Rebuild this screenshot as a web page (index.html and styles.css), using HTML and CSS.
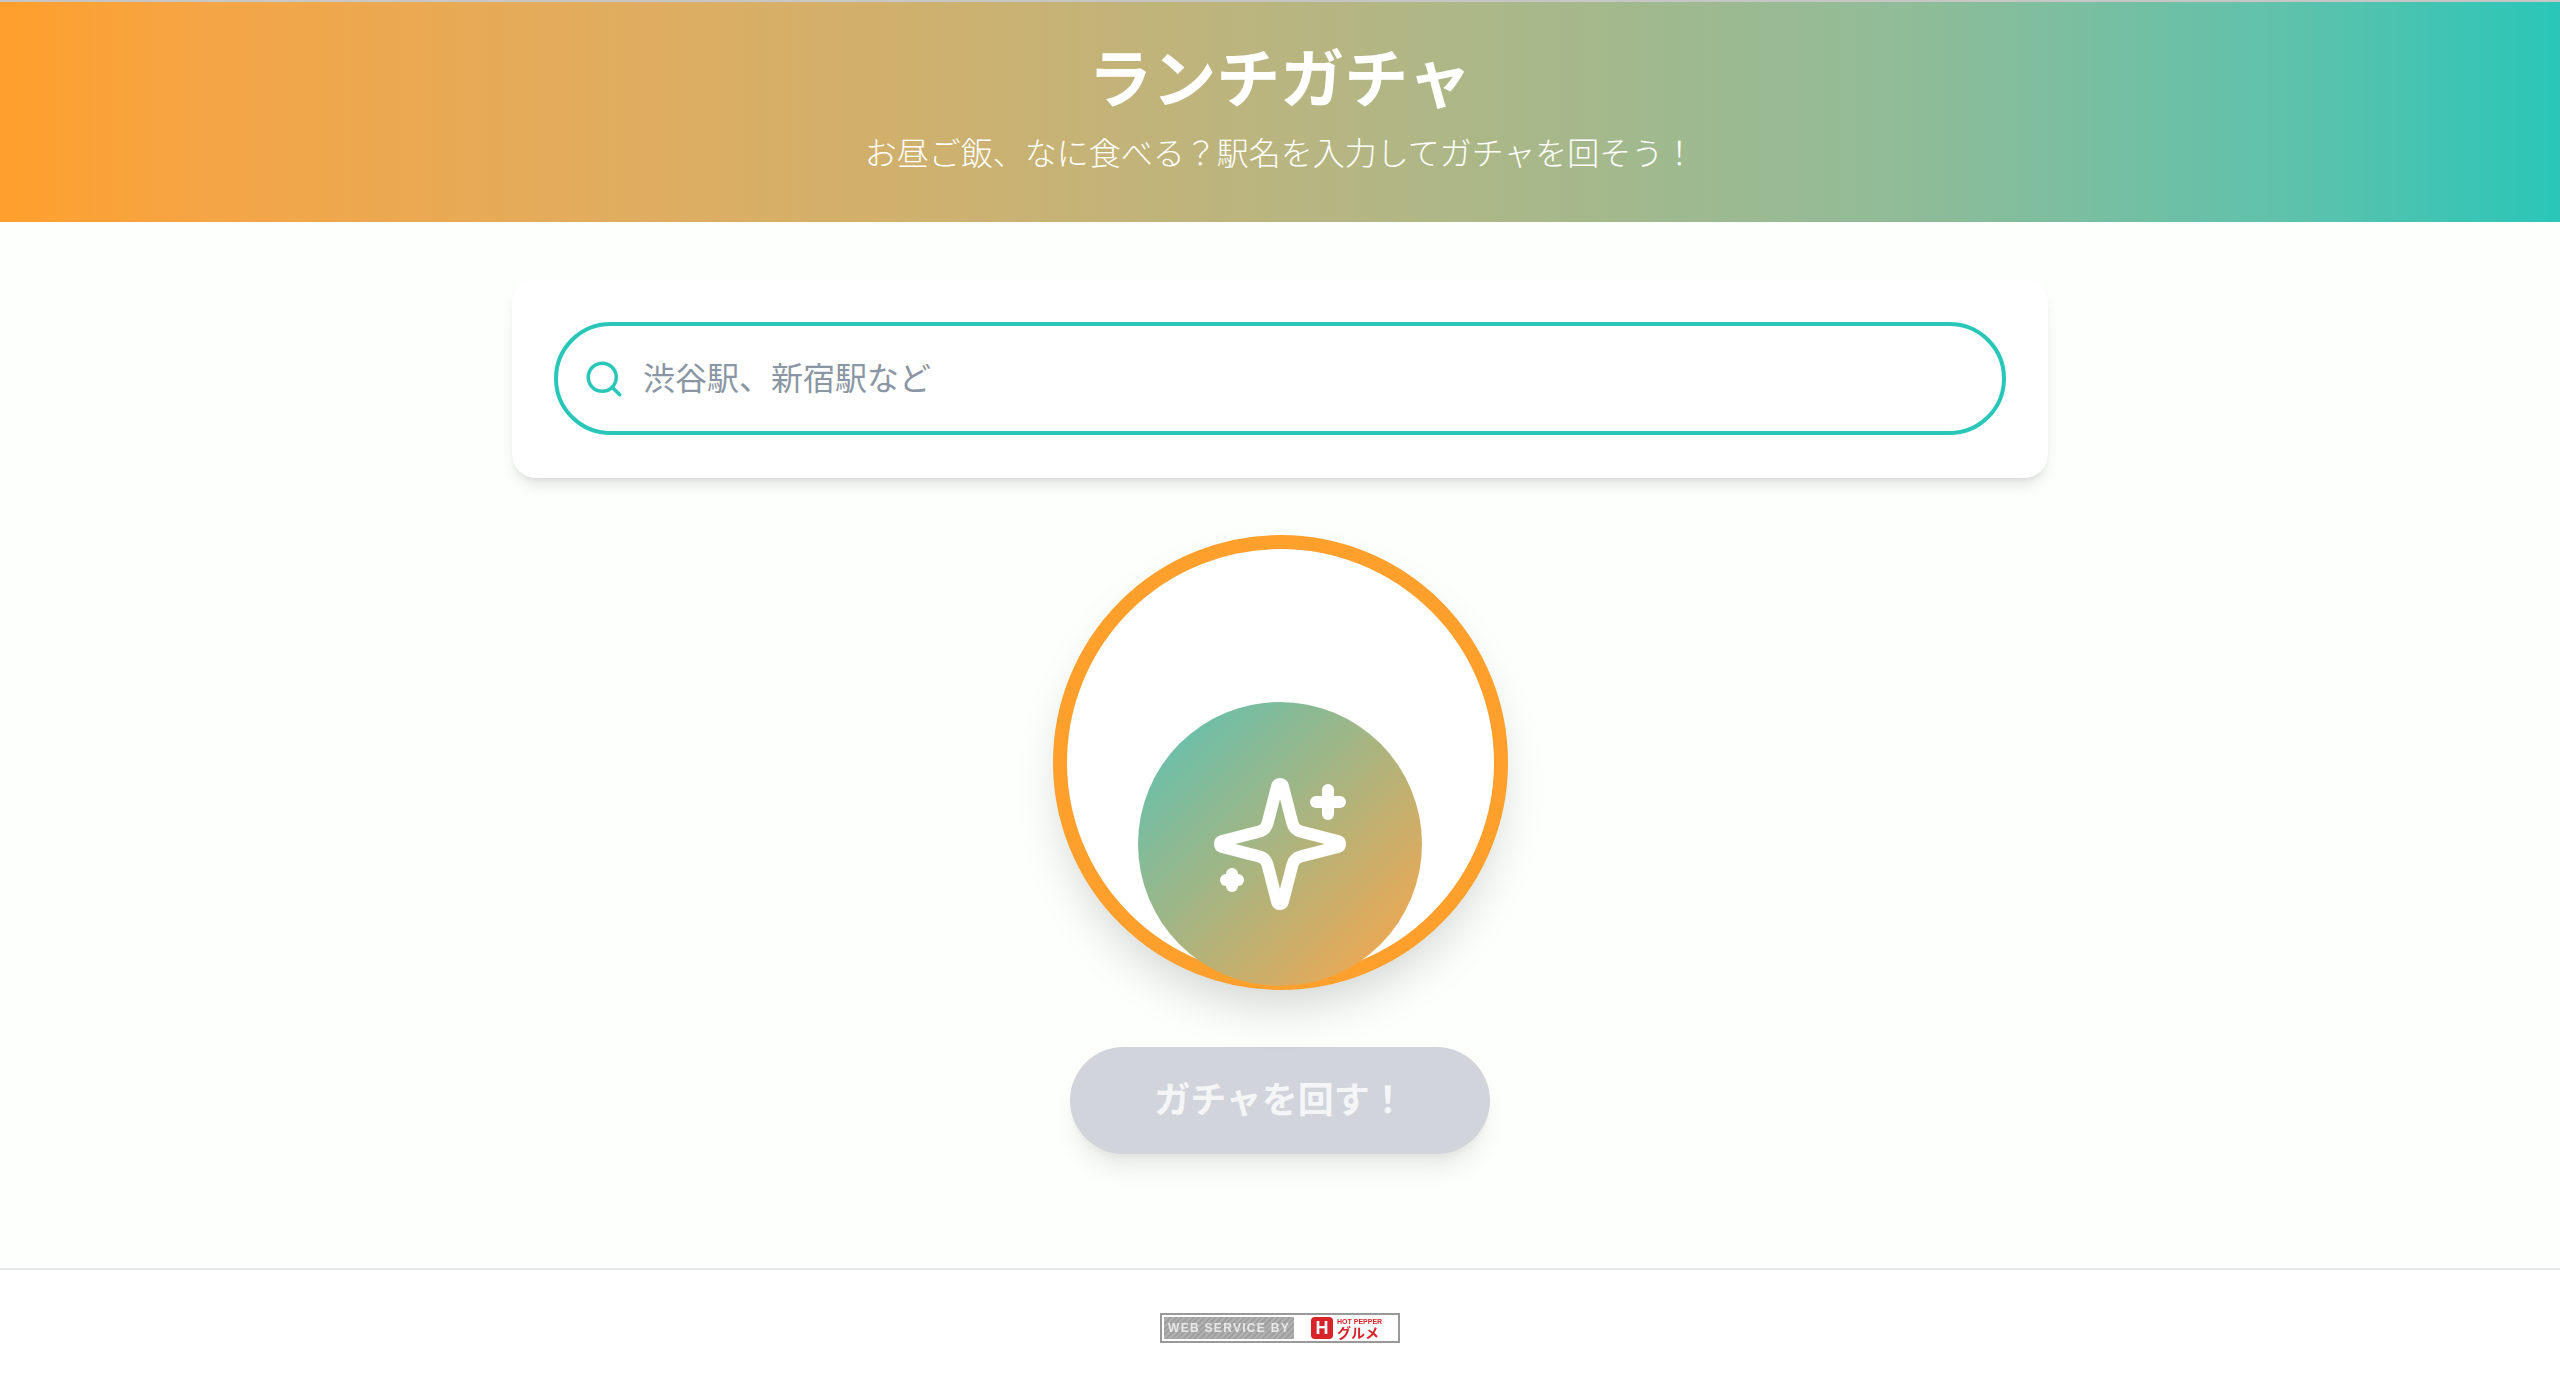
FILE: index.html
```html
<!DOCTYPE html>
<html lang="ja">
<head>
    <meta charset="UTF-8">
    <meta name="viewport" content="width=device-width, initial-scale=1.0">
    <title>ランチガチャ</title>
    <link rel="stylesheet" href="styles.css">
</head>
<body>

    <header class="site-header">
        <h1>ランチガチャ</h1>
        <p>お昼ご飯、なに食べる？駅名を入力してガチャを回そう！</p>
    </header>

    <main class="content">
        <div class="search-card">
            <label class="search-box">
                <svg class="search-icon" viewBox="0 0 24 24" fill="none" stroke="currentColor" stroke-width="2" stroke-linecap="round" stroke-linejoin="round">
                    <path d="m21 21-4.3-4.3"/>
                    <circle cx="11" cy="11" r="8"/>
                </svg>
                <input type="text" placeholder="渋谷駅、新宿駅など">
            </label>
        </div>

        <div class="machine">
            <div class="ball">
                <svg class="sparkle" viewBox="0 0 24 24" fill="none" stroke="currentColor" stroke-width="2" stroke-linecap="round" stroke-linejoin="round">
                    <path d="M9.937 15.5A2 2 0 0 0 8.5 14.063l-6.135-1.582a.5.5 0 0 1 0-.962L8.5 9.936A2 2 0 0 0 9.937 8.5l1.582-6.135a.5.5 0 0 1 .963 0L14.063 8.5A2 2 0 0 0 15.5 9.937l6.135 1.581a.5.5 0 0 1 0 .964L15.5 14.063a2 2 0 0 0-1.437 1.437l-1.582 6.135a.5.5 0 0 1-.963 0z"/>
                    <path d="M20 3v4"/>
                    <path d="M22 5h-4"/>
                    <path d="M4 17v2"/>
                    <path d="M5 18H3"/>
                </svg>
            </div>
        </div>

        <button class="spin-button" disabled>ガチャを回す！</button>
    </main>

    <footer class="site-footer">
        <a class="credit" href="#">
            <span class="credit-label">WEB SERVICE BY</span>
            <span class="credit-logo">
                <span class="credit-mark">H</span>
                <span class="credit-name">
                    <small>HOT PEPPER</small>
                    <b>グルメ</b>
                </span>
            </span>
        </a>
    </footer>

</body>
</html>
```

FILE: styles.css
```css
* {
    box-sizing: border-box;
}
body {
    font-family: "Noto Sans CJK JP", "Noto Sans", sans-serif;
    background-color: #fcfffc;
    margin: 0;
    padding: 0;
    min-height: 1385px;
    display: flex;
    flex-direction: column;
}
.site-header {
    height: 222px;
    padding-top: 32px;
    text-align: center;
    color: white;
    background: linear-gradient(90deg, #ff9f2c, #f5a545 8%, #dfad60 25%, #b9b580 50%, #8fbc98 75%, #5cc2ac 90%, #2ac6b8);
    border-top: 2px solid #c6c6c4;
}
.site-header h1 {
    margin: 0;
    font-size: 64px;
    line-height: 80px;
    font-weight: 700;
}
.site-header p {
    margin: 0;
    margin-top: 13px;
    font-size: 32px;
    line-height: 48px;
    font-weight: 300;
}
.content {
    display: flex;
    flex-direction: column;
    align-items: center;
    gap: 57px;
    padding: 57px 0 114px;
}
.search-card {
    width: 1536px;
    padding: 43px 42px;
    background: white;
    border-radius: 24px;
    box-shadow: 0 10px 15px -3px rgba(0, 0, 0, 0.1), 0 4px 6px -4px rgba(0, 0, 0, 0.1);
}
.search-box {
    display: flex;
    align-items: center;
    gap: 18px;
    height: 113px;
    padding-left: 25px;
    color: #2ac6b8;
    background: white;
    border: 4px solid #2ac6b8;
    border-radius: 57px;
}
.search-icon {
    width: 42px;
    height: 42px;
    flex: none;
}
.search-box input {
    flex: 1;
    height: 54px;
    padding: 0 0 6px;
    border: none;
    outline: none;
    background: transparent;
    font-family: inherit;
    font-size: 32px;
    color: #333;
}
.search-box input::placeholder {
    color: #8a96a3;
    opacity: 1;
}
.machine {
    position: relative;
    width: 455px;
    height: 455px;
    background: white;
    border: 14px solid #ff9f2c;
    border-radius: 50%;
    box-shadow: 0 25px 50px -12px rgba(0, 0, 0, 0.18);
}
.ball {
    position: absolute;
    left: 71px;
    bottom: -10px;
    width: 284px;
    height: 284px;
    display: flex;
    align-items: center;
    justify-content: center;
    color: white;
    border-radius: 50%;
    background: linear-gradient(135deg, #56c3b7, #ffa547);
}
.sparkle {
    width: 144px;
    height: 144px;
}
.spin-button {
    width: 420px;
    height: 107px;
    padding: 0 0 8px;
    border: none;
    border-radius: 54px;
    font-family: inherit;
    font-size: 36px;
    font-weight: 700;
    color: rgba(255, 255, 255, 0.8);
    background: #d1d5db;
    box-shadow: 0 20px 25px -5px rgba(0, 0, 0, 0.08), 0 8px 10px -6px rgba(0, 0, 0, 0.06);
}
.site-footer {
    flex: 1;
    display: flex;
    justify-content: center;
    padding-top: 43px;
    background: white;
    border-top: 2px solid #e5e7eb;
}
.credit {
    display: flex;
    width: 240px;
    height: 30px;
    padding: 2px;
    text-decoration: none;
    background: white;
    border: 2px solid #999;
    filter: blur(0.5px);
}
.credit-label {
    width: 130px;
    font-family: "Liberation Sans", sans-serif;
    font-size: 12px;
    font-weight: 700;
    line-height: 22px;
    letter-spacing: 1.3px;
    text-align: center;
    white-space: nowrap;
    color: #e8e8e8;
    background: repeating-linear-gradient(135deg, #a0a0a0 0, #a0a0a0 2px, #b0b0b0 2px, #b0b0b0 4px);
}
.credit-logo {
    flex: 1;
    display: flex;
    align-items: center;
    justify-content: center;
    gap: 4px;
    color: #d8232a;
}
.credit-mark {
    width: 22px;
    height: 22px;
    font-family: "Liberation Sans", sans-serif;
    font-size: 18px;
    font-weight: 700;
    line-height: 23px;
    text-align: center;
    color: white;
    background: #d8232a;
    border-radius: 4px;
}
.credit-name {
    display: flex;
    flex-direction: column;
    width: 42px;
    white-space: nowrap;
}
.credit-name small {
    font-family: "Liberation Sans", sans-serif;
    font-size: 7px;
    font-weight: 700;
    line-height: 8px;
}
.credit-name b {
    font-size: 14px;
    line-height: 13px;
}
```
